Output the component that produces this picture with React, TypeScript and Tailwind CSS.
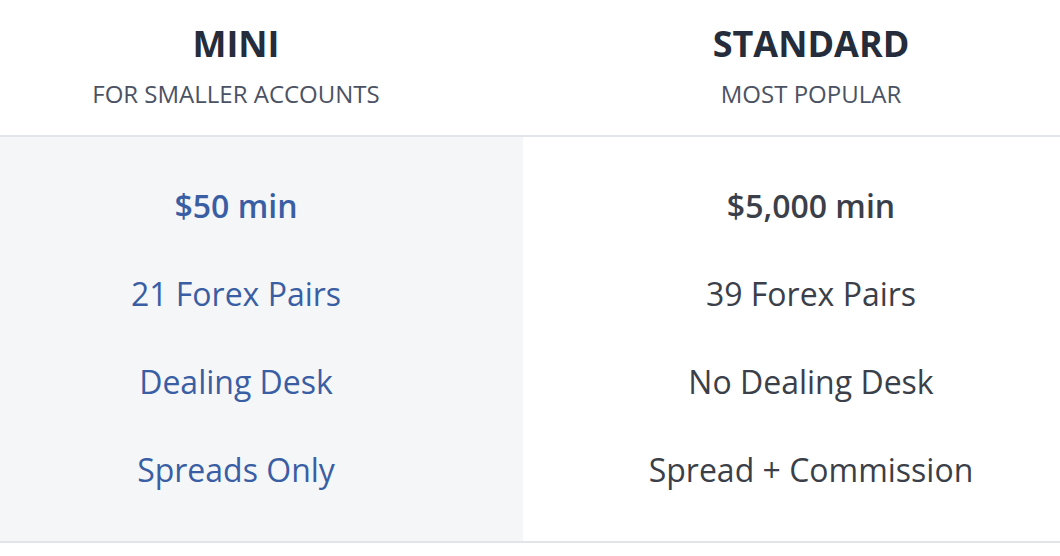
const plans = [
  {
    name: "MINI",
    tag: "FOR SMALLER ACCOUNTS",
    rows: ["$50 min", "21 Forex Pairs", "Dealing Desk", "Spreads Only"],
  },
  {
    name: "STANDARD",
    tag: "MOST POPULAR",
    rows: ["$5,000 min", "39 Forex Pairs", "No Dealing Desk", "Spread + Commission"],
  },
]

export default function App() {
  return (
    <div className="w-[1060px] h-[556px] bg-white font-['Open_Sans',sans-serif] overflow-hidden">
      <div className="grid grid-cols-[523px_537px] h-[137px] border-b-2 border-[#e1e5ea]">
        <div className="flex flex-col items-center pr-[51px] pt-[22px]">
          <div className="text-[36px] leading-[44px] font-bold text-[#252c3b]">{plans[0].name}</div>
          <div className="text-[24px] leading-[30px] mt-[13px] text-[#4b5263]">{plans[0].tag}</div>
        </div>
        <div className="flex flex-col items-center pl-[39px] pt-[22px]">
          <div className="text-[36px] leading-[44px] font-bold text-[#252c3b]">{plans[1].name}</div>
          <div className="text-[24px] leading-[30px] mt-[13px] text-[#4b5263]">{plans[1].tag}</div>
        </div>
      </div>
      <div className="grid grid-cols-[523px_537px] h-[406px] border-b-2 border-[#e1e5ea]">
        <div className="bg-[#f5f6f8] pr-[51px] pt-[25px] flex flex-col">
          {plans[0].rows.map((r, i) => (
            <div
              key={r}
              className={`h-[88px] flex items-center justify-center text-[32px] text-[#3a5ea4] ${i === 0 ? "font-semibold" : ""}`}
            >
              {r}
            </div>
          ))}
        </div>
        <div className="pl-[39px] pt-[25px] flex flex-col">
          {plans[1].rows.map((r, i) => (
            <div
              key={r}
              className={`h-[88px] flex items-center justify-center text-[32px] text-[#3b3f4a] ${i === 0 ? "font-semibold" : ""}`}
            >
              {r}
            </div>
          ))}
        </div>
      </div>
    </div>
  )
}
